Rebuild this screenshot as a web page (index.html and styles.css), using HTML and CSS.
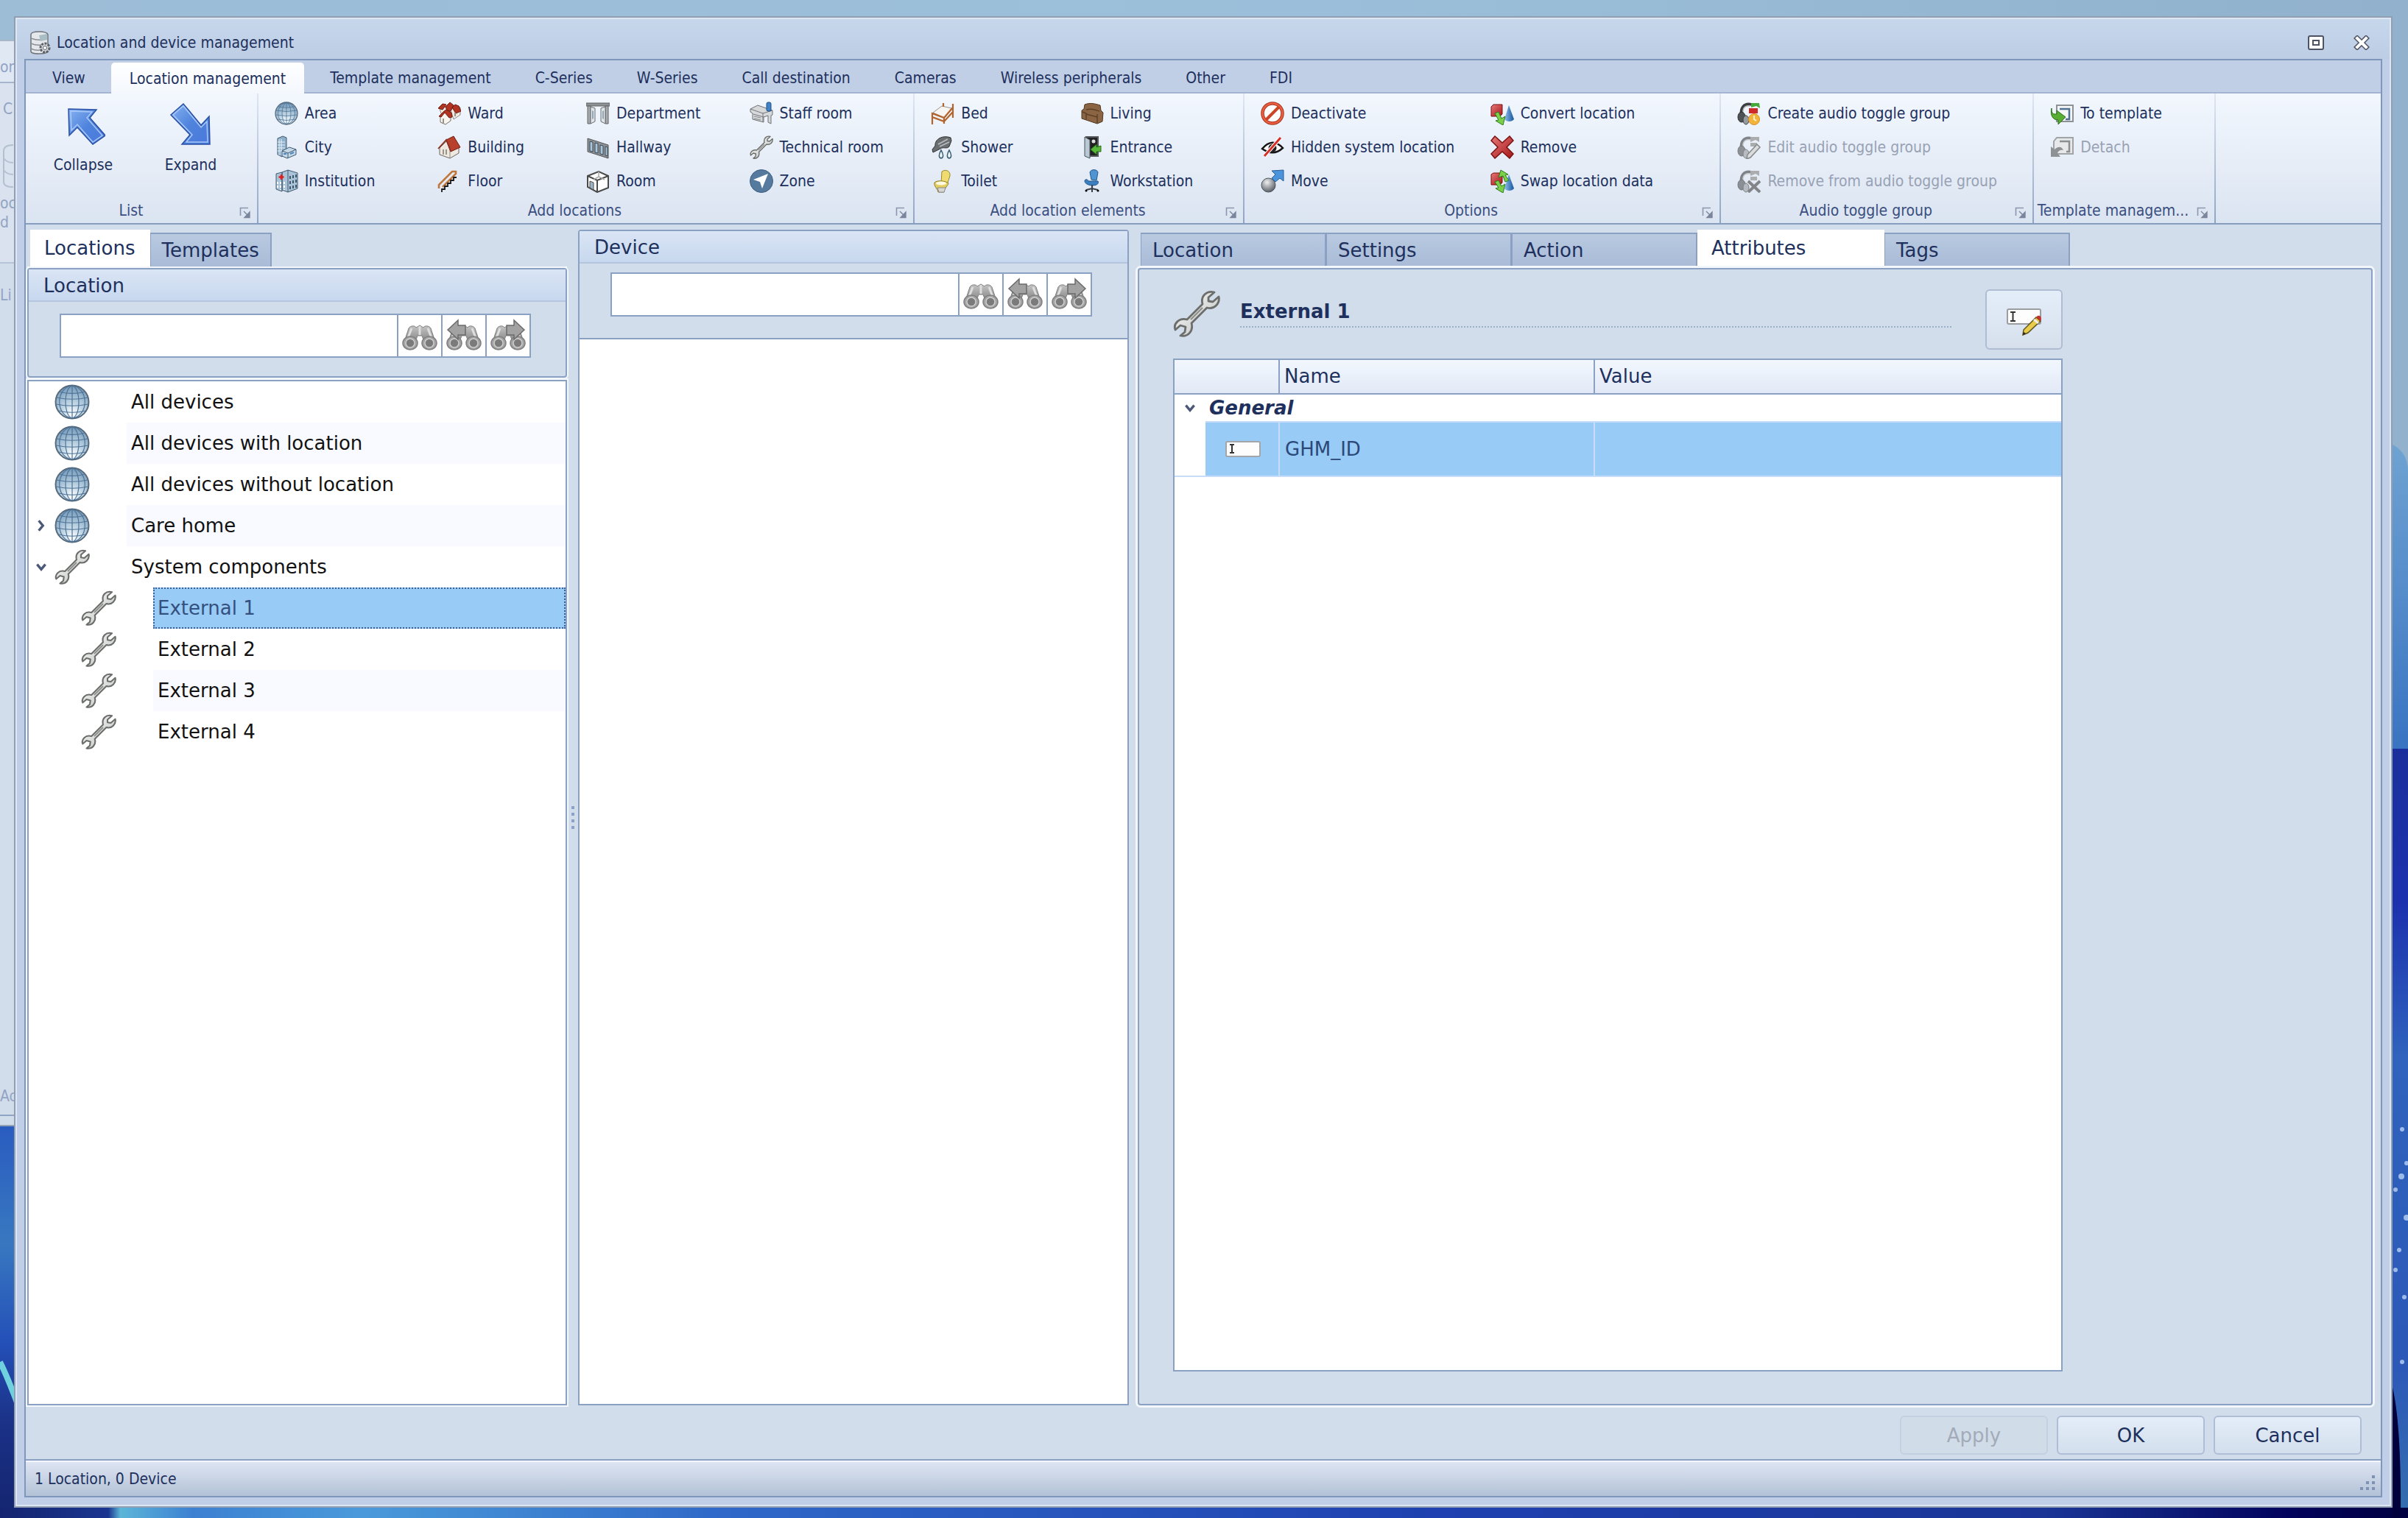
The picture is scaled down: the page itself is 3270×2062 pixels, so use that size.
FILE: index.html
```html
<!DOCTYPE html>
<html lang="en">
<head>
<meta charset="utf-8">
<meta name="viewport" content="width=device-width, initial-scale=1">
<title>Location and device management</title>
<link rel="stylesheet" href="styles.css">
</head>
<body>
<svg class="defs" aria-hidden="true">
  <defs>
    <linearGradient id="gBlue" x1="0" y1="0" x2="1" y2="1"><stop offset="0" stop-color="#86b2f2"/><stop offset=".5" stop-color="#4f83dc"/><stop offset="1" stop-color="#4a78dc"/></linearGradient>
    <radialGradient id="gGlobe" cx=".5" cy=".85" r=".85"><stop offset="0" stop-color="#fff"/><stop offset=".35" stop-color="#c4d8e6"/><stop offset="1" stop-color="#7197b8"/></radialGradient>
    <linearGradient id="gSteel" x1="0" y1="0" x2="1" y2="1"><stop offset="0" stop-color="#fff"/><stop offset="1" stop-color="#b9bcbb"/></linearGradient>
    <linearGradient id="gBin" x1="0" y1="0" x2="0" y2="1"><stop offset="0" stop-color="#c6c6c6"/><stop offset="1" stop-color="#7d7d7d"/></linearGradient>
    <linearGradient id="gRed" x1="0" y1="0" x2="1" y2="1"><stop offset="0" stop-color="#e8797a"/><stop offset="1" stop-color="#a51616"/></linearGradient>
    <radialGradient id="gBall" cx=".4" cy=".3" r=".7"><stop offset="0" stop-color="#eee"/><stop offset="1" stop-color="#5b6268"/></radialGradient>
    <linearGradient id="gCone" x1="0" y1="0" x2="1" y2="0"><stop offset="0" stop-color="#8fc0ee"/><stop offset="1" stop-color="#14539b"/></linearGradient>
  </defs>
  <symbol id="globe" viewBox="0 0 32 32"><circle cx="16" cy="16" r="15" fill="url(#gGlobe)" stroke="#56697a" stroke-width="1.3"/><g fill="none" stroke="#4d7396" stroke-width=".8"><ellipse cx="16" cy="16" rx="6" ry="14.5"/><ellipse cx="16" cy="16" rx="11.5" ry="14.5"/><path d="M16 1v30M2 12q14 3 28 0M1.500 18q14.500 3 29 0M4 24q12 3 24 0M5 7q11 2.500 22 0"/></g></symbol>
  <symbol id="wrench" viewBox="0 0 32 32"><path d="M28 1.500C23 0 18.500 4 20 9.500L9.500 20C4 18.500 0 23 1.500 27L5 24L8.500 25L8 28.500L5 31C10 32 14 28 12.500 22.500L23 12C28 13.500 32 9 31 4.500L27 8L24 7.500L24 5Z" fill="url(#gSteel)" stroke="#6c6e6b" stroke-width="1.400" stroke-linejoin="round"/><path d="M20 12L12 20" stroke="#8e918e" stroke-width="1.200"/></symbol>
  <symbol id="city" viewBox="0 0 32 32"><path d="M4 4l7-3 5 2v18l-6 8-6-3z" fill="#8fb0cb" stroke="#3f5a72"/><path d="M6 5v22M9 5v22M4 9h10M4 13h10M4 17h10M4 21h8" stroke="#e8f2fa" stroke-width="1"/><path d="M10 21l10-5 9 3v7l-12 5-7-3z" fill="#c3d7e6" stroke="#3f5a72"/><path d="M10 21l8 3 11-5M18 24v7" fill="none" stroke="#3f5a72"/><path d="M12 25h4M21 25l5-2" stroke="#4b86bd" stroke-width="2"/></symbol>
  <symbol id="institution" viewBox="0 0 32 32"><path d="M2 6l8-2v26l-8-3zM10 4l8-3 13 4v21l-13 5-8-3z" fill="#a9c4d9" stroke="#41586d"/><path d="M18 1v30" stroke="#41586d"/><path d="M21 9v20M25 8v20M29 7v19" stroke="#41586d" stroke-width="2" stroke-dasharray="4 3"/><path d="M4 17v10M8 17v11M13 17v11" stroke="#fff" stroke-width="2" stroke-dasharray="3 2"/><path d="M9 7v7M5.500 10.500h7" stroke="#e02020" stroke-width="2.600"/></symbol>
  <symbol id="building" viewBox="0 0 32 32"><path d="M3 17L13 7l16 6v11l-12 7-14-5z" fill="#eee9e0" stroke="#6d675f"/><path d="M17 31V18" stroke="#8d877f"/><path d="M12 6L22 1l9 15-13 6z" fill="#b8402c" stroke="#6f1d12"/><path d="M1 18L12 6l6 15" fill="none" stroke="#8b3324" stroke-width="1.800"/><path d="M8 19v7M12 19v7" stroke="#9a948a" stroke-width="2"/></symbol>
  <symbol id="ward" viewBox="0 0 32 32"><path d="M3 10l5-4 6 3v8l-8 2zM18 12l5-6 8 2v10l-9 6z" fill="#efe9e1" stroke="#77706a" stroke-width=".8"/><path d="M1 9l6-6 5 1-5 7zM11 7l6-6 5 4-4 8-5-1zM20 8l4-4 5 2 3 7-7 3z" fill="#b23422" stroke="#6f1d12"/><path d="M4 20l5-6 9 3v9l-7 5-7-3z" fill="#f8f4ee" stroke="#77706a"/><path d="M2 20l7-7 3-2 7 4 1 6-4 1-6-7-5 6z" fill="#b23422" stroke="#6f1d12"/><path d="M8 23v6M24 15v5" stroke="#99928a" stroke-width="2"/></symbol>
  <symbol id="floor" viewBox="0 0 32 32"><path d="M2 26V21L20 3h5v3L7 24" fill="none" stroke="#c0773c" stroke-width="2.600"/><path d="M6 31v-4h4v-4h4v-4h4v-4h4v-4h4" fill="none" stroke="#1b1b1b" stroke-width="1.800"/></symbol>
  <symbol id="department" viewBox="0 0 32 32"><path d="M0 2h32v4H0z" fill="#8d9194" stroke="#5e6265"/><path d="M2 6h4v24H2zM26 6h4v24h-4z" fill="#a9adb0" stroke="#5e6265"/><path d="M6 7l6 2v18l-6 3zM26 7l-6 2v18l6 3z" fill="#dfe4e8" stroke="#6a6e72"/><path d="M8 12l2 1v10l-2 1zM24 12l-2 1v10l2 1z" fill="#8fa4b5"/></symbol>
  <symbol id="hallway" viewBox="0 0 32 32"><path d="M2 4l28 9v18L2 22z" fill="#8b9196" stroke="#555"/><path d="M5 8l4 1v13l-4-1zM12 10l4 1v13l-4-1zM19 13l4 1v12l-4-1zM26 15l3 1v12l-3-1z" fill="#a9c5dc" stroke="#3d4850"/></symbol>
  <symbol id="room" viewBox="0 0 32 32"><path d="M2 9L17 3l13 6v16L15 31 2 24z" fill="#fff" stroke="#4a4a4a" stroke-width="2"/><path d="M2 9l13 6 15-6M15 15v16" fill="none" stroke="#4a4a4a" stroke-width="2"/><path d="M17 3v7l8 4M17 10l-7 4" fill="none" stroke="#aaa" stroke-width="1.500"/><path d="M5 16l5 2v10l-5-3z" fill="#9eb4c4" stroke="#4a4a4a"/></symbol>
  <symbol id="staff" viewBox="0 0 32 32"><path d="M1 10l10-5 20 7v6l-2 1v11l-4-2V19l-6 2v7L4 24V16l-3-2z" fill="#d6d8da" stroke="#6d7174"/><path d="M1 10l17 6 13-4M18 15v12M19 21l-14-4" fill="none" stroke="#74787b"/><path d="M6 20l9 2M6 23l9 2" stroke="#84888b"/><rect x="23" y="1" width="6" height="12" rx="2" fill="#3f82c8" stroke="#214f80"/></symbol>
  <symbol id="zone" viewBox="0 0 32 32"><circle cx="16" cy="16" r="15.500" fill="#557a9d" stroke="#3f5f80"/><path d="M25 6L17 26l-3-9-9-3z" fill="#fff"/></symbol>
  <symbol id="bed" viewBox="0 0 32 32"><path d="M3 15l12-9 13 3-9 13z" fill="#f7f5f2" stroke="#9b9288"/><path d="M2 31V16l16 6 12-14v14M18 22v8M17 2v5M30 3v8M2 21l16 6L30 14" fill="none" stroke="#b4632a" stroke-width="2.200"/></symbol>
  <symbol id="shower" viewBox="0 0 32 32"><path d="M6 14C5 5 16-1 27 3l1 4-3 8c-3 4-8 0-12 3l-10 5-1-4z" fill="#6b6e70" stroke="#303233"/><path d="M10 12l13-7M12 15l13-6" stroke="#b9bdc0" stroke-width="1.500"/><path d="M14 20c-3 5-4 10 0 11 4-1 3-6 0-11zM25 20c-3 5-4 10 0 11 4-1 3-6 0-11z" fill="#f1f7fb" stroke="#3f6075" stroke-width="1.500"/></symbol>
  <symbol id="toilet" viewBox="0 0 32 32"><path d="M15 3c6-4 12 0 11 6l-4 12-8-2z" fill="#efdc70" stroke="#9b872a"/><path d="M5 18c4-4 16-2 19 1-1 4-5 5-6 12h-8c-1-5-6-8-5-13z" fill="#e2cf60" stroke="#8d7a2c"/><path d="M9 25h11l-2 6h-7z" fill="#d7d7d4" stroke="#8a8a86"/><ellipse cx="14" cy="19" rx="7" ry="2.500" fill="#fffbe0"/></symbol>
  <symbol id="living" viewBox="0 0 32 32"><path d="M2 12l3-2 1-6c8-3 14-1 21 1l1 7 3 3-1 12-7 3L2 23z" fill="#8b6543" stroke="#4f361f"/><path d="M8 11c7-2 12 0 18 2M8 17l15 4M3 14l5 2v8M23 17v12" fill="none" stroke="#5d4127" stroke-width="1.500"/></symbol>
  <symbol id="entrance" viewBox="0 0 32 32"><path d="M7 2h17v26H9" fill="#222" stroke="#565a5d" stroke-width="2"/><path d="M6 2l7 4v25l-7-3z" fill="#b9c8d3" stroke="#44505a"/><circle cx="18" cy="8" r="2.500" fill="#ddd"/><path d="M28 14v8h-6v4l-8-7 8-7v4z" fill="#57b83a" stroke="#26701a"/></symbol>
  <symbol id="workstation" viewBox="0 0 32 32"><path d="M13 4c2-5 10-4 11 0l-2 11-7-1z" fill="#4f95d2" stroke="#24588d"/><path d="M6 16c0-3 4-3 5 0l13 0c2 4-3 6-7 6S6 20 6 16z" fill="#3b7fc0" stroke="#24588d"/><path d="M16 21v5M8 28l8-2 8 2M16 25v6" stroke="#3b4046" stroke-width="2" fill="none"/><circle cx="8" cy="29" r="1.500"/><circle cx="24" cy="29" r="1.500"/></symbol>
  <symbol id="deactivate" viewBox="0 0 32 32"><circle cx="16" cy="16" r="13.500" fill="#fff" stroke="#a8301a" stroke-width="4.500"/><circle cx="16" cy="16" r="13.500" fill="none" stroke="#e8603f" stroke-width="2.600"/><path d="M25 7L7 25" stroke="#cb4527" stroke-width="4"/></symbol>
  <symbol id="hidden" viewBox="0 0 32 32"><path d="M2 18Q16 2 30 17Q17 29 2 18z" fill="#fff" stroke="#151515" stroke-width="2.400"/><circle cx="16" cy="17" r="5.500" fill="#222"/><path d="M27 3L5 28" stroke="#fff" stroke-width="5"/><path d="M27 3L5 28" stroke="#d53028" stroke-width="3"/></symbol>
  <symbol id="move" viewBox="0 0 32 32"><circle cx="10.500" cy="21.500" r="9.500" fill="url(#gBall)" stroke="#4d5358"/><path d="M15 2l16-1v15l-5-4-6 5-5-5 5-5z" fill="#4b94db" stroke="#285f9b"/></symbol>
  <symbol id="convert" viewBox="0 0 32 32"><path d="M1 7l3-3h12v13l-3 3H1z" fill="url(#gRed)" stroke="#7c1111"/><path d="M25 5l7 19c-3 4-10 4-13 0z" fill="url(#gCone)"/><path d="M6 16l5-2 4 9 5-3-3 12-10-6 4-1z" fill="#7bd04a" stroke="#2c7a1c"/></symbol>
  <symbol id="swap" viewBox="0 0 32 32"><path d="M1 7l3-2h12v13l-3 3H1z" fill="url(#gRed)" stroke="#7c1111"/><path d="M25 7l7 19c-3 4-10 4-13 0z" fill="url(#gCone)"/><path d="M6 17l5-2 4 8 5-3-3 12-10-6 4-1zM25 15l-5 2-3-8-6 2 3-10 10 6-4 1z" fill="#7bd04a" stroke="#2c7a1c"/></symbol>
  <symbol id="remove" viewBox="0 0 32 32"><path d="M6 1l10 9L26 1l5 6-9 9 9 9-5 6-10-9-10 9-5-6 9-9-9-9z" fill="url(#gRed)" stroke="#7c1111" stroke-width="1.500"/></symbol>
  <symbol id="phones" viewBox="0 0 32 32"><path d="M6 19C4 8 10 2 19 4" fill="none" stroke="#3c3f42" stroke-width="4"/><path d="M8 17C7 8 11 5 18 6" fill="none" stroke="#b5b8ba" stroke-width="1.500"/><ellipse cx="6" cy="21" rx="5" ry="7" fill="#505356" stroke="#2a2c2e"/><ellipse cx="12" cy="25" rx="4" ry="6" fill="#989b9e" stroke="#3a3c3e"/></symbol>
  <symbol id="audioNew" viewBox="0 0 32 32"><use href="#phones"/><path d="M16 9h12v7H16z" fill="#cf2a2a"/><path d="M19 2h11l1 7-5-3-7 2z" fill="#45a839"/><circle cx="23" cy="24" r="7.500" fill="#f2b53a" stroke="#d8922a"/><path d="M23 19v5l3 2" stroke="#fff3cf" stroke-width="2" fill="none"/></symbol>
  <symbol id="audioEdit" viewBox="0 0 32 32"><g opacity=".6"><use href="#phones"/></g><path d="M18 2h12v7l-5-3-7 3M18 10h9v5h-9z" fill="#aaacae"/><path d="M27 12l4 4-13 14-5 2 1-6z" fill="#d9dbdc" stroke="#85888a" stroke-width="1.500"/></symbol>
  <symbol id="audioRemove" viewBox="0 0 32 32"><g opacity=".6"><use href="#phones"/></g><path d="M18 2h12v7l-5-3-7 3M18 10h9v5h-9z" fill="#aaacae"/><path d="M15 16l16 15M31 16L15 31" stroke="#828486" stroke-width="4"/></symbol>
  <symbol id="toTemplate" viewBox="0 0 32 32"><path d="M9 5h22v22H9z" fill="#f4f6f8" stroke="#8d9296" stroke-width="2"/><path d="M13 10h13v14h-5" fill="none" stroke="#4f7192" stroke-width="2.500"/><path d="M2 9c0 8 2 8 7 8v-5l12 9-10 10v-6C3 25 0 18 2 9z" fill="#58ad33" stroke="#2c6f18"/></symbol>
  <symbol id="detach" viewBox="0 0 32 32"><path d="M9 3h22v22H5V8z" fill="#e6e8ea" stroke="#a1a4a6" stroke-width="2"/><path d="M13 8h13v14h-4" fill="none" stroke="#8c8f92" stroke-width="2.500"/><path d="M1 15l5 4c5-5 10-4 12 1-4-1-7 1-8 4l4 5H1z" fill="#8f9294"/></symbol>
  <symbol id="binoculars" viewBox="0 0 48 48"><path d="M9 14c2-4 9-4 10-1l5-3 5 3c1-3 8-3 10 1l6 18-14 3-4-11h-6l-4 11-14-3z" fill="url(#gBin)" stroke="#808080"/><path d="M13 14l-5 13M35 14l5 13M24 11v12" stroke="#dedede" stroke-width="3"/><ellipse cx="11" cy="34" rx="10" ry="9" fill="#a4a4a4" stroke="#808080" stroke-width="1.500"/><ellipse cx="37" cy="34" rx="10" ry="9" fill="#a4a4a4" stroke="#808080" stroke-width="1.500"/><ellipse cx="11" cy="34" rx="6" ry="6" fill="#7b7b7b" stroke="#cfcfcf" stroke-width="1.500"/><ellipse cx="37" cy="34" rx="6" ry="6" fill="#7b7b7b" stroke="#cfcfcf" stroke-width="1.500"/></symbol>
  <symbol id="binPrev" viewBox="0 0 48 48"><use href="#binoculars"/><path d="M2 16L16 3v7h10v13H16v6z" fill="#a2a2a2" stroke="#6b6b6b" stroke-width="1.500"/></symbol>
  <symbol id="binNext" viewBox="0 0 48 48"><use href="#binoculars"/><path d="M46 16L32 3v7H22v13h10v6z" fill="#a2a2a2" stroke="#6b6b6b" stroke-width="1.500"/></symbol>
  <symbol id="launcher" viewBox="0 0 16 16"><path d="M1.500 12V1.500H12" fill="none" stroke="#8b97ad" stroke-width="1.600"/><path d="M6 6l5 5M14 7v7.500H7z" stroke="#7a869c" stroke-width="1.400" fill="#7a869c"/></symbol>
  <symbol id="chevR" viewBox="0 0 16 16"><path d="M5 2l5 6-5 6" fill="none" stroke="#4b5878" stroke-width="3"/></symbol>
  <symbol id="chevD" viewBox="0 0 16 16"><path d="M3 5l5 6 5-6" fill="none" stroke="#4b5878" stroke-width="3"/></symbol>
  <symbol id="textField" viewBox="0 0 48 24"><rect x="1" y="2" width="46" height="20" rx="2" fill="#fdfdfd" stroke="#a3a6a8" stroke-width="2"/><path d="M6 6h6M9 6v11M6 17h6" stroke="#333" stroke-width="2"/></symbol>
</svg>

<svg class="wallpaper" viewBox="0 0 3270 2062" preserveAspectRatio="none" aria-hidden="true">
  <defs>
    <linearGradient id="sky"><stop offset="0" stop-color="#9dbdd7"/><stop offset=".55" stop-color="#9bbfda"/><stop offset="1" stop-color="#91b1cc"/></linearGradient>
    <linearGradient id="rs" x1="0" y1="0" x2="0" y2="1"><stop offset="0" stop-color="#1b2f9c"/><stop offset=".2" stop-color="#1c31ae"/><stop offset=".4" stop-color="#2f63bd"/><stop offset=".8" stop-color="#2c58b8"/><stop offset="1" stop-color="#356fae"/></linearGradient>
    <linearGradient id="ls" x1="0" y1="0" x2="0" y2="1"><stop offset="0" stop-color="#2a5cc0"/><stop offset=".3" stop-color="#3878c0"/><stop offset=".55" stop-color="#2450b8"/><stop offset=".75" stop-color="#1b3288"/><stop offset="1" stop-color="#14246f"/></linearGradient>
    <linearGradient id="bs"><stop offset="0" stop-color="#14246f"/><stop offset=".045" stop-color="#1a3590"/><stop offset=".05" stop-color="#5cb6d8"/><stop offset=".08" stop-color="#3c80d2"/><stop offset=".15" stop-color="#4a9ada"/><stop offset=".3" stop-color="#2f68c8"/><stop offset=".6" stop-color="#1e40b0"/><stop offset=".85" stop-color="#1a3596"/><stop offset=".95" stop-color="#02035c"/><stop offset="1" stop-color="#000040"/></linearGradient>
    <linearGradient id="ms" x1="0" y1="0" x2="0" y2="1"><stop offset="0" stop-color="#6fa3d2"/><stop offset="1" stop-color="#3a74c2"/></linearGradient>
  </defs>
  <path d="M0 0h3270v2062H0z" fill="url(#sky)"/>
  <path d="M3240 600q30 10 30 40v377h-30z" fill="url(#ms)"/>
  <path d="M3240 1017h30v1045h-30z" fill="url(#rs)"/>
  <path d="M0 1530h30v532H0z" fill="url(#ls)"/>
  <path d="M0 1850q10 20 25 60" stroke="#6fd0de" stroke-width="8" fill="none"/>
  <path d="M0 2048h3270v14H0z" fill="url(#bs)"/>
  <path d="M3249 1885q12 50 11 177h-11z" fill="#00003c"/>
  <g fill="#b9d2f4" opacity=".8"><circle cx="3261" cy="1598" r="4"/><circle cx="3253" cy="1616" r="3"/><circle cx="3268" cy="1580" r="3"/><circle cx="3268" cy="1654" r="4"/><circle cx="3258" cy="1698" r="3"/><circle cx="3253" cy="1725" r="3"/><circle cx="3265" cy="1762" r="3"/><circle cx="3262" cy="1850" r="3"/><circle cx="3262" cy="1534" r="3"/></g>
</svg>

<div class="back-window" aria-hidden="true">
  <div class="back-title">on</div>
  <div class="back-ribbon"><span>C</span><svg viewBox="0 0 20 60"><path d="M18 2Q5 2 5 10v42q0 7 13 7M5 20q4 6 13 6M5 36q4 6 13 6" fill="none" stroke="#b3c0d0" stroke-width="2"/></svg><span class="back-word">oc<br>d</span></div>
  <div class="back-body">Li</div>
  <div class="back-foot">Ad</div>
</div>

<main class="window">
  <header class="titlebar">
    <svg class="app-icon" viewBox="0 0 28 32" aria-hidden="true"><path d="M1 5Q1 1 12 1t12 4v22q0 4-12 4T1 27z" fill="#e5e8ea" stroke="#6e7479" stroke-width="1.500"/><path d="M1 10q8 3 17 2M1 17q7 3 14 2M1 24q6 3 12 2" fill="none" stroke="#8a9095" stroke-width="1.500"/><path d="M12 6l11-2v8l-9 2z" fill="#a9bdc4"/><circle cx="20" cy="23" r="6" fill="#d5d8da" stroke="#5c6166" stroke-width="3" stroke-dasharray="3 1.500"/><circle cx="20" cy="23" r="2.500" fill="#fff" stroke="#5c6166"/></svg>
    <h1>Location and device management</h1>
    <div class="win-btns">
      <button aria-label="Maximize"><svg viewBox="0 0 24 20"><rect x="2" y="1" width="20" height="18" rx="2" fill="#fff" stroke="#4d5364" stroke-width="2"/><rect x="8" y="7" width="8" height="6" fill="#fff" stroke="#4d5364" stroke-width="2"/></svg></button>
      <button aria-label="Close"><svg viewBox="0 0 24 20"><path d="M6 4l12 12M18 4L6 16" stroke="#4d5364" stroke-width="7" stroke-linecap="square"/><path d="M6 4l12 12M18 4L6 16" stroke="#fff" stroke-width="4" stroke-linecap="square"/></svg></button>
    </div>
  </header>

  <div class="frame">
    <nav class="ribbon-tabs" role="tablist">
      <button role="tab">View</button>
      <button role="tab" class="active" aria-selected="true">Location management</button>
      <button role="tab">Template management</button>
      <button role="tab">C-Series</button>
      <button role="tab">W-Series</button>
      <button role="tab">Call destination</button>
      <button role="tab">Cameras</button>
      <button role="tab">Wireless peripherals</button>
      <button role="tab">Other</button>
      <button role="tab">FDI</button>
    </nav>

    <div class="ribbon">
      <section class="group">
        <div class="large-items">
          <button><svg viewBox="-5 -6 60 60"><path d="M5 5l38 1-9 11 21 24-17 12-21-23-11 11z" fill="url(#gBlue)" stroke="#2a51a5" stroke-width="1.500"/><path d="M8 8l29 1-7 8 21 24-13 9-21-24-8 8z" fill="none" stroke="#a8c8f8" stroke-width="1.500"/></svg>Collapse</button>
          <button><svg viewBox="0 -3 60 60"><path d="M20 1L3 16l26 27-11 13h38l-1-38-11 12z" fill="url(#gBlue)" stroke="#2a51a5" stroke-width="1.500"/><path d="M20 4L6 16l26 27-8 10h29l-1-28-8 8z" fill="none" stroke="#a8c8f8" stroke-width="1.500"/></svg>Expand</button>
        </div>
        <footer><h2>List</h2><button class="launch" aria-label="List options"><svg><use href="#launcher"/></svg></button></footer>
      </section>
      <section class="group">
        <div class="items cols-4">
          <button><svg><use href="#globe"/></svg>Area</button>
          <button><svg><use href="#city"/></svg>City</button>
          <button><svg><use href="#institution"/></svg>Institution</button>
          <button><svg><use href="#ward"/></svg>Ward</button>
          <button><svg><use href="#building"/></svg>Building</button>
          <button><svg><use href="#floor"/></svg>Floor</button>
          <button><svg><use href="#department"/></svg>Department</button>
          <button><svg><use href="#hallway"/></svg>Hallway</button>
          <button><svg><use href="#room"/></svg>Room</button>
          <button><svg><use href="#staff"/></svg>Staff room</button>
          <button><svg><use href="#wrench"/></svg>Technical room</button>
          <button><svg><use href="#zone"/></svg>Zone</button>
        </div>
        <footer><h2>Add locations</h2><button class="launch" aria-label="Add locations options"><svg><use href="#launcher"/></svg></button></footer>
      </section>
      <section class="group">
        <div class="items cols-elements">
          <button><svg><use href="#bed"/></svg>Bed</button>
          <button><svg><use href="#shower"/></svg>Shower</button>
          <button><svg><use href="#toilet"/></svg>Toilet</button>
          <button><svg><use href="#living"/></svg>Living</button>
          <button><svg><use href="#entrance"/></svg>Entrance</button>
          <button><svg><use href="#workstation"/></svg>Workstation</button>
        </div>
        <footer><h2>Add location elements</h2><button class="launch" aria-label="Add location elements options"><svg><use href="#launcher"/></svg></button></footer>
      </section>
      <section class="group">
        <div class="items cols-2">
          <button><svg><use href="#deactivate"/></svg>Deactivate</button>
          <button><svg><use href="#hidden"/></svg>Hidden system location</button>
          <button><svg><use href="#move"/></svg>Move</button>
          <button><svg><use href="#convert"/></svg>Convert location</button>
          <button><svg><use href="#remove"/></svg>Remove</button>
          <button><svg><use href="#swap"/></svg>Swap location data</button>
        </div>
        <footer><h2>Options</h2><button class="launch" aria-label="Options settings"><svg><use href="#launcher"/></svg></button></footer>
      </section>
      <section class="group">
        <div class="items">
          <button><svg><use href="#audioNew"/></svg>Create audio toggle group</button>
          <button disabled><svg><use href="#audioEdit"/></svg>Edit audio toggle group</button>
          <button disabled><svg><use href="#audioRemove"/></svg>Remove from audio toggle group</button>
        </div>
        <footer><h2>Audio toggle group</h2><button class="launch" aria-label="Audio toggle group options"><svg><use href="#launcher"/></svg></button></footer>
      </section>
      <section class="group">
        <div class="items">
          <button><svg><use href="#toTemplate"/></svg>To template</button>
          <button disabled><svg><use href="#detach"/></svg>Detach</button>
        </div>
        <footer><h2>Template managem...</h2><button class="launch" aria-label="Template management options"><svg><use href="#launcher"/></svg></button></footer>
      </section>
    </div>

    <div class="workspace">
      <section class="pane locations">
        <div class="tabs" role="tablist">
          <button role="tab" class="active" aria-selected="true">Locations</button>
          <button role="tab">Templates</button>
        </div>
        <div class="panel">
          <h2><label for="find-location">Location</label></h2>
          <div class="search">
            <input id="find-location" type="text">
            <button aria-label="Find"><svg><use href="#binoculars"/></svg></button>
            <button aria-label="Find previous"><svg><use href="#binPrev"/></svg></button>
            <button aria-label="Find next"><svg><use href="#binNext"/></svg></button>
          </div>
        </div>
        <ul class="tree" role="tree">
          <li role="treeitem"><span class="twist"></span><svg><use href="#globe"/></svg><span class="name">All devices</span></li>
          <li role="treeitem" class="alt"><span class="twist"></span><svg><use href="#globe"/></svg><span class="name">All devices with location</span></li>
          <li role="treeitem"><span class="twist"></span><svg><use href="#globe"/></svg><span class="name">All devices without location</span></li>
          <li role="treeitem" class="alt" aria-expanded="false"><span class="twist"><svg><use href="#chevR"/></svg></span><svg><use href="#globe"/></svg><span class="name">Care home</span></li>
          <li role="treeitem" aria-expanded="true"><span class="twist"><svg><use href="#chevD"/></svg></span><svg><use href="#wrench"/></svg><span class="name">System components</span></li>
          <li role="treeitem" class="child selected" aria-selected="true"><span class="twist"></span><svg><use href="#wrench"/></svg><span class="name">External 1</span></li>
          <li role="treeitem" class="child"><span class="twist"></span><svg><use href="#wrench"/></svg><span class="name">External 2</span></li>
          <li role="treeitem" class="child alt"><span class="twist"></span><svg><use href="#wrench"/></svg><span class="name">External 3</span></li>
          <li role="treeitem" class="child"><span class="twist"></span><svg><use href="#wrench"/></svg><span class="name">External 4</span></li>
        </ul>
      </section>

      <div class="splitter" role="separator"><i></i><i></i><i></i><i></i></div>

      <section class="pane devices">
        <div class="panel">
          <h2><label for="find-device">Device</label></h2>
          <div class="search">
            <input id="find-device" type="text">
            <button aria-label="Find"><svg><use href="#binoculars"/></svg></button>
            <button aria-label="Find previous"><svg><use href="#binPrev"/></svg></button>
            <button aria-label="Find next"><svg><use href="#binNext"/></svg></button>
          </div>
        </div>
        <div class="device-list"></div>
      </section>

      <section class="pane details">
        <div class="tabs" role="tablist">
          <button role="tab">Location</button>
          <button role="tab">Settings</button>
          <button role="tab">Action</button>
          <button role="tab" class="active" aria-selected="true">Attributes</button>
          <button role="tab">Tags</button>
        </div>
        <div class="detail-panel">
          <div class="detail-head">
            <svg class="detail-icon"><use href="#wrench"/></svg>
            <h2>External 1</h2>
            <button class="edit" aria-label="Edit attributes"><svg viewBox="0 0 50 40"><rect x="2" y="2" width="45" height="20" rx="2" fill="#fdfdfd" stroke="#9b9ea0" stroke-width="2"/><path d="M6 6h7M9.500 6v12M6 18h7" stroke="#333" stroke-width="2"/><path d="M41 13l6 5-17 16-7 3 1-7z" fill="#e9cb4a" stroke="#5f5320" stroke-width="1.500"/><path d="M41 13l2-2q5-1 5 5l-2 2z" fill="#c4342c"/><path d="M39 15l6 5-2 2-6-5z" fill="#eee"/><path d="M23 37l1-4 3 2z" fill="#222"/></svg></button>
          </div>
          <div class="grid-box">
            <table>
              <colgroup><col class="c-gutter"><col class="c-type"><col class="c-name"><col></colgroup>
              <thead><tr><th colspan="2" aria-label="Type"></th><th>Name</th><th>Value</th></tr></thead>
              <tbody>
                <tr class="category"><td colspan="4"><svg><use href="#chevD"/></svg>General</td></tr>
                <tr class="record"><td class="gutter"></td><td class="type"><svg><use href="#textField"/></svg></td><td>GHM_ID</td><td></td></tr>
              </tbody>
            </table>
          </div>
        </div>
      </section>
    </div>

    <div class="actions">
      <button disabled>Apply</button>
      <button>OK</button>
      <button>Cancel</button>
    </div>
    <footer class="status"><span>1 Location, 0 Device</span><svg viewBox="0 0 24 24" aria-hidden="true"><path d="M18 1h4v4h-4zM10 9h4v4h-4zM18 9h4v4h-4zM2 17h4v4H2zM10 17h4v4h-4zM18 17h4v4h-4z" fill="#7f92b5"/></svg></footer>
  </div>
</main>
</body>
</html>
```
FILE: styles.css
```css
:root {
  --line: #8ba1c3;
  --ink: #20305c;
  --face: #d2ddeb;
  --select: #98cbf6;
  --ui: "DejaVu Sans Condensed", "DejaVu Sans", sans-serif;
  --text: "DejaVu Sans", sans-serif;
}

* { box-sizing: border-box; }

body {
  margin: 0;
  min-height: 100vh;
  padding: 22px 21px 14px 19px;
  position: relative;
  display: flex;
  font: 26px/32px var(--text);
  color: var(--ink);
}

h1, h2 { margin: 0; font: inherit; }
ul { margin: 0; padding: 0; list-style: none; }
button { font: inherit; color: inherit; background: none; border: 0; padding: 0; margin: 0; border-radius: 0; }
svg { display: block; flex: none; }
.defs { position: absolute; width: 0; height: 0; }

.wallpaper { position: absolute; inset: 0; width: 100%; height: 100%; z-index: -2; }

/* window that peeks out on the left */
.back-window {
  position: absolute; left: 0; top: 54px; z-index: -1;
  width: 19px; height: 1476px; overflow: hidden;
  display: flex; flex-direction: column;
  font: 21px/26px var(--ui); color: #92a4c4;
  background: #d2ddeb; border-top: 2px solid #a9b8c8; border-bottom: 2px solid #93a3b5;
}
.back-title { height: 57px; padding-top: 22px; background: #e0e8f4; border-bottom: 2px solid #a4b5cd; }
.back-ribbon { height: 245px; padding-top: 22px; border-bottom: 2px solid #b4c3d6; background: #d9e2ee; }
.back-ribbon span { display: block; padding-left: 4px; }
.back-ribbon .back-word { padding-left: 0; padding-top: 8px; }
.back-ribbon svg { width: 20px; height: 60px; margin-top: 34px; }
.back-body { flex: 1; padding-top: 30px; }
.back-foot { height: 40px; border-bottom: 2px solid #8fa5c4; margin-bottom: 12px; }

.window {
  flex: 1; min-width: 0;
  display: flex; flex-direction: column;
  padding: 2px 12px 12px;
  border: 2px solid #929eb2;
  box-shadow: inset 0 0 0 2px #dce7f3;
  background: #c0cfe7;
}

.titlebar {
  height: 54px; margin: 0 -10px; padding: 14px 26px 4px 18px;
  display: flex; align-items: center; gap: 8px;
  font: 21px/26px var(--ui);
  background: linear-gradient(#c6d6eb, #bdcde4);
}
.titlebar h1 { flex: 1; }
.app-icon { width: 28px; height: 34px; }
.win-btns { display: flex; gap: 38px; }
.win-btns svg { width: 24px; height: 20px; }

.frame {
  flex: 1; display: flex; flex-direction: column;
  border: 2px solid #7f97bb;
  background: var(--face);
}

.ribbon-tabs {
  height: 45px; padding: 3px 0 0 6px;
  display: flex;
  font: 21px/26px var(--ui);
  background: #c0cfe6; border-bottom: 2px solid #a3b5d2;
}
.ribbon-tabs button { padding: 2px 25px 0; margin: 0 5px; }
.ribbon-tabs .active {
  height: 44px; background: linear-gradient(#fff, #f3f7fd); border-radius: 5px 5px 0 0;
  padding: 0 25px;
}

.ribbon {
  height: 178px;
  display: grid; grid-template-columns: 314fr 892fr 448fr 648fr 425fr 247fr;
  padding: 0 224px 0 2px;
  font: 21px/26px var(--ui);
  background: linear-gradient(#f2f7fe, #e6edf7 55%, #dbe4f1);
  border-bottom: 2px solid #879dc0;
}
.group {
  min-width: 0; padding-top: 4px;
  display: flex; flex-direction: column;
  border-right: 2px solid; border-image: linear-gradient(#dfe7f2, #8fa4c5) 1;
}
.group footer { height: 34px; display: flex; align-items: center; padding-right: 8px; }
.group h2 { flex: 1; padding-right: 6px; text-align: center; white-space: nowrap; color: #3a4f80; }
.launch svg { width: 16px; height: 16px; margin-top: 6px; }
.items {
  flex: 1; padding-left: 22px;
  display: grid; grid-auto-flow: column; grid-template-rows: repeat(3, 46px);
}
.cols-4 { grid-template-columns: 222fr 202fr 222fr 223fr; }
.cols-2 { grid-template-columns: 1fr 1fr; }
.cols-elements { grid-template-columns: 203fr 222fr; }
.items button { display: flex; align-items: center; gap: 9px; white-space: nowrap; }
.items svg { width: 32px; height: 32px; }
.items button:disabled { color: #98a2b4; }
.large-items { flex: 1; display: flex; gap: 26px; padding: 6px 0 0 16px; align-items: flex-start; }
.large-items button { width: 120px; display: flex; flex-direction: column; align-items: center; gap: 14px; }
.large-items svg { width: 60px; height: 60px; }

.workspace {
  flex: 1;
  display: grid; grid-template-columns: 733fr 15px 748fr 12px 1677fr;
  padding: 7px 11px 0 2px;
}
.pane { min-width: 0; display: flex; flex-direction: column; }
.details { grid-column: 5; }

.tabs { display: flex; align-items: flex-end; padding-left: 4px; height: 52px; border-bottom: 2px solid #fff; }
.tabs button {
  height: 46px; padding: 0 15px; text-align: left;
  background: linear-gradient(#b8c9e0, #aabbd8);
  border: 1px solid var(--line); border-width: 2px 2px 0 1px;
}
.tabs .active { height: 50px; padding: 0 18px 2px; background: #fff; border-color: #fff; }
.details .tabs button { width: 252px; }
.details .tabs .active { width: 254px; }

.panel { border: 2px solid var(--line); border-radius: 4px; background: var(--face); }
.panel h2 {
  height: 44px; padding: 6px 20px 4px;
  background: linear-gradient(#dae5f5, #c7d8ee); border-bottom: 2px solid #b4c5dd;
}
.search { display: flex; margin: 16px 47px 23px 42px; border: 2px solid var(--line); background: #fff; }
.search input { flex: 1; min-width: 0; height: 56px; border: 0; padding: 0 8px; font: inherit; outline: 0; }
.search button { width: 60px; display: flex; justify-content: center; align-items: center; border-left: 2px solid var(--line); }
.search svg { width: 48px; height: 48px; }

.locations .panel { height: 149px; box-shadow: 0 0 0 2px #f3f7fb; }
.tree { flex: 1; margin-top: 3px; background: #fff; border: 2px solid var(--line); box-shadow: 0 0 0 2px #f3f7fb; color: #111; }
.tree li { height: 56px; display: flex; align-items: center; }
.tree li > svg { width: 48px; height: 48px; margin-right: 50px; }
.twist { width: 35px; padding-left: 8px; }
.twist svg { width: 18px; height: 18px; }
.child .twist { width: 71px; }
.name { flex: 1; align-self: stretch; padding: 12px 6px; }
.alt .name { background: #f8faff; }
.selected .name { padding: 10px 4px; background: var(--select); border: 2px dotted #3d5f93; color: #34507f; }

.splitter { display: flex; flex-direction: column; justify-content: center; align-items: center; gap: 5px; }
.splitter i { width: 4px; height: 4px; background: #8ba1c8; }

.devices .panel { border-radius: 4px 4px 0 0; height: 149px; }
.devices .search { margin: 12px 48px 0 42px; }
.device-list { flex: 1; background: #fff; border: 2px solid var(--line); border-top: 0; }

.detail-panel {
  flex: 1; display: flex; flex-direction: column;
  padding: 27px 419px 44px 46px;
  border: 2px solid var(--line); border-radius: 4px;
  box-shadow: 0 0 0 3px #f3f7fb;
}
.detail-head { height: 82px; display: flex; align-items: flex-start; }
.detail-icon { width: 64px; height: 66px; margin-right: 27px; }
.detail-head h2 { flex: 1; margin-right: 46px; padding: 14px 0 4px; font-weight: bold; border-bottom: 2px dotted #9dafc9; }
.edit {
  width: 105px; height: 82px; display: flex; align-items: center; justify-content: center;
  border: 2px solid #aebdd2; border-radius: 6px; background: linear-gradient(#e4eef9, #d7dfed);
}
.edit svg { width: 50px; height: 40px; margin-top: 8px; }

.grid-box { flex: 1; margin-top: 12px; background: #fff; border: 2px solid var(--line); }
table { width: 100%; table-layout: fixed; border-collapse: collapse; }
.c-gutter { width: 42px; }
.c-type { width: 100px; }
.c-name { width: 428px; }
th {
  height: 46px; padding: 0 6px 2px; font-weight: normal; text-align: left;
  background: linear-gradient(#f2f7fe, #e2e9f6);
  border-right: 2px solid var(--line); border-bottom: 2px solid var(--line);
}
th:last-child { border-right: 0; }
td { padding: 0 7px; }
.category td { height: 38px; padding: 0 0 0 12px; font: italic bold 26px/32px var(--text); }
.category svg { display: inline-block; width: 18px; height: 18px; margin-right: 17px; }
.record td { height: 74px; background: var(--select); border: 2px solid #c6dcf8; border-width: 2px 0 2px 2px; color: #2b4878; }
.record .gutter { background: #fff; border-top: 0; border-left: 0; }
.record .type { padding: 0 0 0 27px; border-left: 0; }
.record .type svg { width: 48px; height: 24px; }

.actions { height: 73px; padding: 14px 26px 6px; display: flex; justify-content: flex-end; gap: 12px; }
.actions button {
  width: 201px; border: 2px solid #afbdd6; border-radius: 6px;
  background: linear-gradient(#e4edf9, #d3dfed);
}
.actions button:disabled { color: #a3abb8; background: #d1dce9; border-color: #c3d0e0; }

.status {
  height: 50px; padding: 2px 6px 0 12px;
  display: flex; align-items: center; justify-content: space-between;
  font: 21px/26px var(--ui);
  border-top: 2px solid var(--line); box-shadow: inset 0 2px #f3f7fc;
  background: linear-gradient(#dfe6f4, #b3c2d6);
}
.status svg { width: 24px; height: 24px; margin-top: 12px; }
```
